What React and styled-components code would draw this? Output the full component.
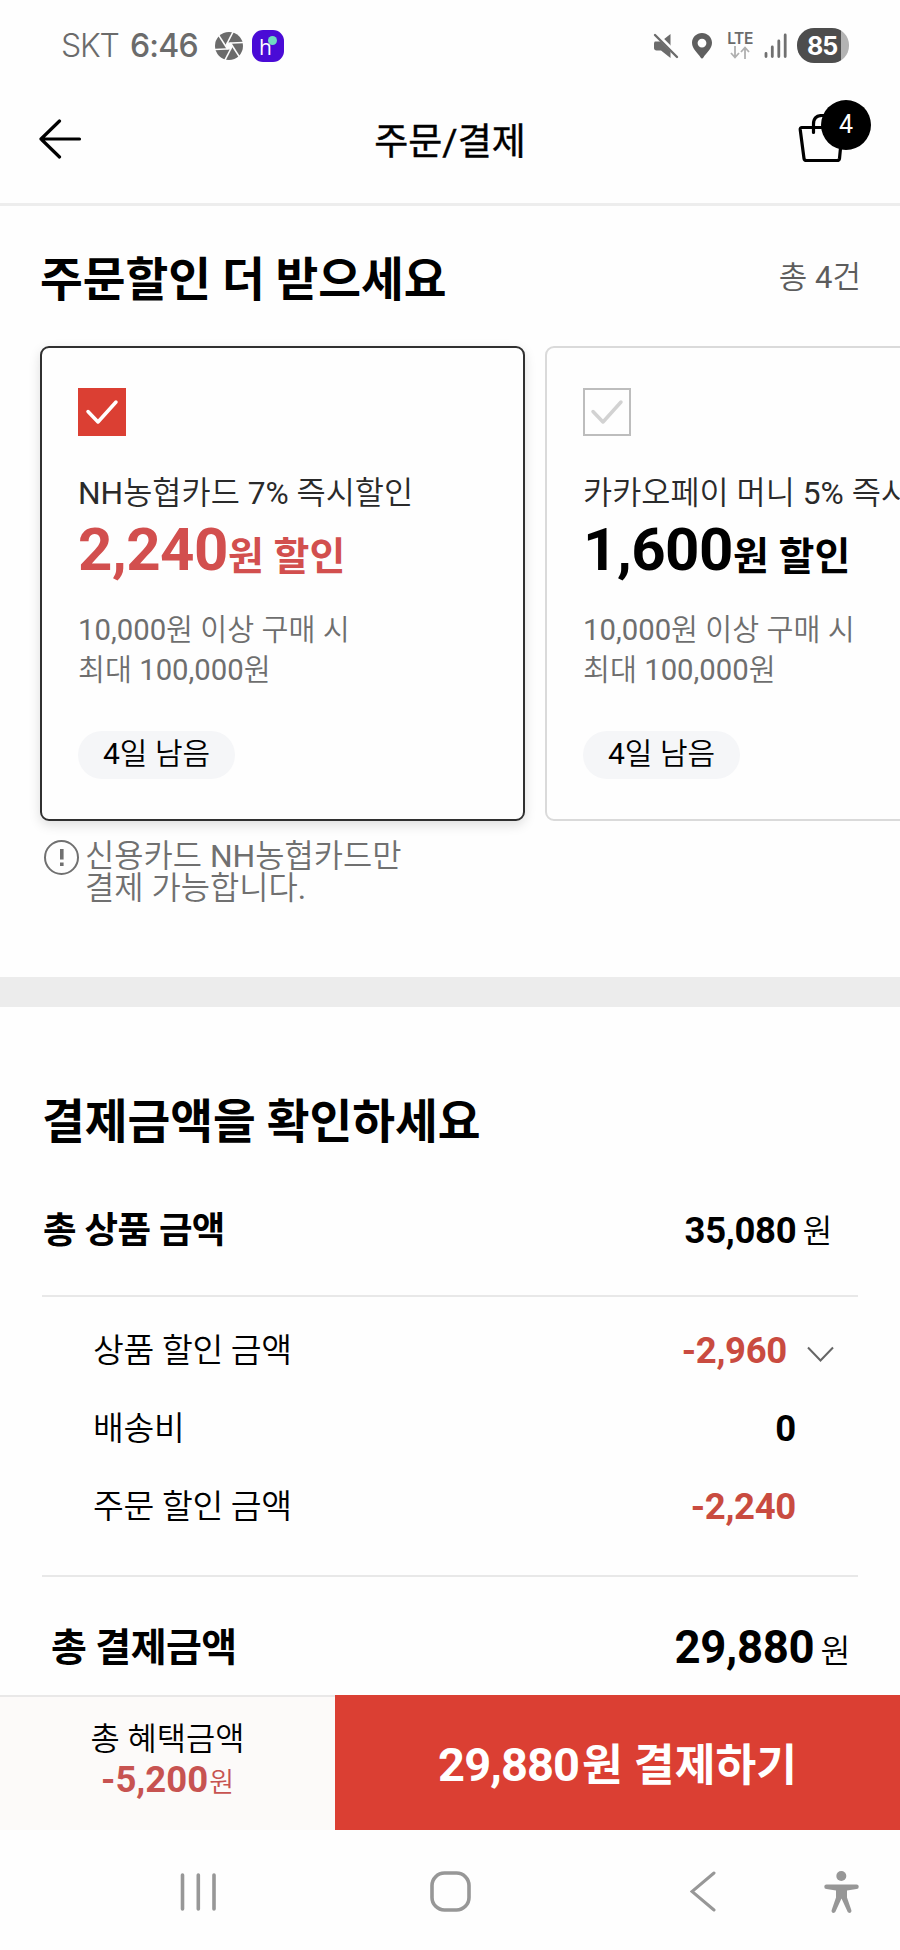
import React from 'react';
import styled, { createGlobalStyle } from 'styled-components'

const GlobalStyle = createGlobalStyle`
    :root{
        --primary: #db3f33;
        --ko: "Noto Sans CJK KR", sans-serif;
        --mix: Roboto, "Noto Sans CJK KR", sans-serif;
        --thin: Roboto, "Noto Sans CJK KR DemiLight", "Noto Sans CJK KR", sans-serif;
        --nav: #979797;
    }
    *{
        box-sizing: border-box;
    }
    body{
        margin: 0;
        background: #fefefe;
        color: #000;
        font-family: var(--mix);
        -webkit-font-smoothing: antialiased;
    }
    h1, h2, p{
        margin: 0;
    }
    svg{
        display: block;
        flex-shrink: 0;
    }
`

const Page = styled.div`
    width: 900px;
    height: 1950px;
    display: flex;
    flex-direction: column;
    overflow: hidden;
    white-space: nowrap;
`

const StatusBar = styled.div`
    height: 92px;
    padding: 0 51px 0 61px;
    display: flex;
    justify-content: space-between;
    align-items: center;
    color: #6b6b6b;
`

const StatusGroup = styled.div`
    display: flex;
    align-items: center;
`

const Carrier = styled.span`
    width: 69px;
    font: 300 32px/40px Inter, sans-serif;
    letter-spacing: -1.2px;
`

const Clock = styled.span`
    width: 85px;
    font: 500 32px/40px Inter, sans-serif;
    letter-spacing: -.8px;
`

const AppBadge = styled.span`
    position: relative;
    width: 32px;
    height: 32px;
    margin-left: 9px;
    border-radius: 11px;
    background: #4a0bd6;
    color: #fff;
    font: 500 21px/35px "Open Sans", sans-serif;
    padding-left: 7px;
    &::after{
        content: '';
        position: absolute;
        top: 6px;
        left: 16px;
        width: 9px;
        height: 9px;
        border-radius: 50%;
        background: #6fdcc0;
    }
`

const LocationPin = styled.svg`
    margin-left: 13px;
`

const Network = styled.div`
    width: 28px;
    margin: 0 10px 0 14px;
    display: flex;
    flex-direction: column;
    align-items: center;
    font: 600 15.5px/14px Inter, sans-serif;
    letter-spacing: -.4px;
`

const Battery = styled.span`
    width: 52px;
    height: 35px;
    margin-left: 10px;
    border-radius: 17px;
    background: linear-gradient(to right, #4d4d4d 44px, #b3b3b3 44px);
    color: #fff;
    font: 700 25px/36px Inter, sans-serif;
    letter-spacing: -1px;
    padding-left: 10px;
`

const Header = styled.header`
    height: 114px;
    padding: 0 29px 0 38px;
    border-bottom: 3px solid #ededed;
    display: grid;
    grid-template-columns: 1fr auto 1fr;
    align-items: center;
`

const HeaderTitle = styled.h1`
    padding: 0 9px 9px 0;
    font: 400 37px/50px var(--mix);
    -webkit-text-stroke: .4px #000;
`

const BackLink = styled.div`
    padding-bottom: 16px;
`

const Bag = styled.div`
    position: relative;
    justify-self: end;
    width: 73px;
    height: 64px;
    margin-bottom: 31px;
    svg{
        margin-top: 14px;
    }
`

const Count = styled.span`
    position: absolute;
    top: 0;
    right: 0;
    width: 50px;
    height: 50px;
    border-radius: 50%;
    background: #000;
    color: #fff;
    font: 400 25px/50px Roboto, sans-serif;
    text-align: center;
`

const DiscountSection = styled.section`
    height: 772px;
    padding: 47px 0 0 40px;
    overflow: hidden;
`

const SectionHead = styled.div`
    display: flex;
    justify-content: space-between;
    align-items: center;
    height: 54px;
    padding-right: 39px;
`

const SectionTitle = styled.h2`
    font: 700 46.5px/54px var(--mix);
    word-spacing: -.8px;
`

const Total = styled.span`
    padding-bottom: 4px;
    font: 400 31px/40px var(--thin);
    color: #5c5c5c;
`

const CardList = styled.div`
    display: flex;
    gap: 20px;
    margin-top: 39px;
`

const Card = styled.article`
    flex: 0 0 485px;
    height: 475px;
    padding: 40px 36px;
    border: 2px solid ${props => props.$selected ? '#303030' : '#dadada'};
    border-radius: 9px;
    box-shadow: ${props => props.$selected ? '0 4px 12px rgba(0,0,0,.13)' : 'none'};
    display: flex;
    flex-direction: column;
    align-items: flex-start;
`

const CheckBox = styled.span`
    width: 48px;
    height: 48px;
    border: 2px solid ${props => props.$checked ? 'var(--primary)' : '#bdbdbd'};
    background: ${props => props.$checked ? 'var(--primary)' : 'transparent'};
    color: ${props => props.$checked ? '#fff' : '#d2d2d2'};
    display: grid;
    place-items: center;
`

const CardName = styled.p`
    margin-top: 38px;
    font: 400 31.7px/40px var(--thin);
    color: #2a2a2a;
`

const CardPrice = styled.p`
    margin-top: 6px;
    font-size: 60px;
    font-weight: 700;
    line-height: 60px;
    letter-spacing: -.5px;
    color: ${props => props.$selected ? '#d24f4e' : '#000'};
    span{
        font: 700 39px/1 var(--mix);
        letter-spacing: 0;
    }
`

const CardTerms = styled.p`
    margin-top: 30px;
    font: 400 29.3px/40px var(--thin);
    color: #6e6e6e;
`

const DaysLeft = styled.span`
    height: 48px;
    margin-top: 41px;
    padding: 0 25px;
    border-radius: 24px;
    background: #f5f6f8;
    font: 400 30px/46px var(--thin);
`

const Notice = styled.div`
    display: flex;
    gap: 5px;
    margin-top: 18px;
    padding-left: 3px;
    color: #707070;
    p{
        margin-top: 1px;
        font: 400 31.8px/32.5px var(--thin);
    }
`

const Divider = styled.div`
    height: 30px;
    background: #ececec;
`

const AmountSection = styled.section`
    flex: 1;
    padding: 88px 42px 0;
`

const TotalRow = styled.div`
    display: flex;
    justify-content: space-between;
    align-items: center;
    height: ${props => props.$height};
    padding: ${props => props.$padding};
    font: 700 ${props => props.$size}/50px var(--mix);
    letter-spacing: -.6px;
`

const Amount = styled.span`
    display: flex;
    align-items: baseline;
    font: 700 ${props => props.$size || '36.5px'}/50px Roboto, sans-serif;
    letter-spacing: -.3px;
    color: ${props => props.$minus ? '#c94b40' : '#000'};
    i{
        margin-left: 6px;
        font: 350 32.5px/1 var(--ko);
    }
`

const Breakdown = styled.div`
    height: 282px;
    padding: 15px 0 0 51px;
    border-top: 2px solid #e8e8e8;
    border-bottom: 2px solid #e8e8e8;
`

const BreakdownRow = styled.div`
    display: flex;
    align-items: center;
    height: 78px;
    padding-right: ${props => props.$expandable ? '24px' : '62px'};
    > span:first-child{
        flex: 1;
        font: 350 33.5px/50px var(--mix);
        letter-spacing: -.3px;
    }
    svg{
        margin: 6px 0 0 20px;
    }
`

const PayBar = styled.div`
    height: 135px;
    display: flex;
`

const Benefit = styled.div`
    width: 335px;
    border-top: 2px solid #e9e8e8;
    background: #fcfaf9;
    display: flex;
    flex-direction: column;
    align-items: center;
    padding-top: 21px;
    font-size: 31.8px;
    line-height: 43px;
    font-weight: 350;
    strong{
        font-size: 36.5px;
        font-weight: 700;
        line-height: 38px;
        color: #c75351;
    }
    i{
        font: 350 27px/1 var(--ko);
        margin-left: 1px;
    }
`

const PayButton = styled.div`
    flex: 1;
    background: var(--primary);
    color: #fff;
    font: 700 44.3px/142px var(--mix);
    text-align: center;
    span{
        font: 700 47px/1 Roboto, sans-serif;
        letter-spacing: -.9px;
        margin-right: 3px;
    }
`

const NavBar = styled.nav`
    height: 120px;
    padding: 3px 41px 0 180px;
    display: grid;
    grid-template-columns: 250px 260px 134px 36px;
    align-items: center;
    color: var(--nav);
`

const discounts = [
    { name: 'NH농협카드 7% 즉시할인', price: '2,240', selected: true },
    { name: '카카오페이 머니 5% 즉시할인', price: '1,600', selected: false },
]

const breakdown = [
    { label: '상품 할인 금액', value: '-2,960', minus: true, expandable: true },
    { label: '배송비', value: '0' },
    { label: '주문 할인 금액', value: '-2,240', minus: true },
]

function Aperture() {
    return (
        <svg width="28" height="28" viewBox="0 0 28 28">
            <circle cx="14" cy="14" r="14" fill="#6b6b6b"/>
            {
                [0, 60, 120, 180, 240, 300].map(angle => (
                    <path
                        key={angle}
                        d="M10.500 14.500L18.500 -1"
                        stroke="#fefefe"
                        strokeWidth="1.600"
                        transform={`rotate(${angle} 14 14)`}
                    />
                ))
            }
            <circle cx="14" cy="14" r="2.800" fill="#fefefe"/>
        </svg>
    )
}

function StatusIcons() {
    return (
        <>
            <svg width="26" height="28" viewBox="0 0 26 28" fill="currentColor">
                <path d="M2 9.500h6l9.500-7.500v24L8 18.500H3.500C2 18.500 1 17.500 1 16v-4c0-1 .4-2.500 1-2.500z"/>
                <path d="M1.500 .5L25 24" stroke="#fefefe" strokeWidth="4.500"/>
                <path d="M2 3L24 25" stroke="currentColor" strokeWidth="2.400" strokeLinecap="round"/>
            </svg>
            <LocationPin width="20" height="26" viewBox="0 0 20 26">
                <path
                    d="M10 0C4.500 0 0 4.300 0 9.800 0 16 6 20 8.600 24.500c.7 1.200 2.100 1.200 2.800 0C14 20 20 16 20 9.800 20 4.300 15.500 0 10 0zM10 5.700a4.400 4.400 0 1 1 0 8.800 4.400 4.400 0 0 1 0-8.800z"
                    fill="#5f5f5f"
                    fillRule="evenodd"
                />
            </LocationPin>
        </>
    )
}

function CheckMark() {
    return (
        <svg width="34" height="28" viewBox="0 0 34 28" fill="none">
            <path d="M3 13.500L13 24L31 4" stroke="currentColor" strokeWidth="3.500" strokeLinecap="round" strokeLinejoin="round"/>
        </svg>
    )
}

function DiscountCard({ name, price, selected }) {
    return (
        <Card $selected={selected}>
            <CheckBox $checked={selected}>
                <CheckMark/>
            </CheckBox>
            <CardName>{name}</CardName>
            <CardPrice $selected={selected}>{price}<span>원 할인</span></CardPrice>
            <CardTerms>
                10,000원 이상 구매 시<br/>
                최대 100,000원
            </CardTerms>
            <DaysLeft>4일 남음</DaysLeft>
        </Card>
    )
}

function App() {
    return (
        <Page>
            <GlobalStyle/>
            <StatusBar>
                <StatusGroup>
                    <Carrier>SKT</Carrier>
                    <Clock>6:46</Clock>
                    <Aperture/>
                    <AppBadge>h</AppBadge>
                </StatusGroup>
                <StatusGroup>
                    <StatusIcons/>
                    <Network>
                        LTE
                        <svg width="20" height="13" viewBox="0 0 20 13" fill="none" stroke="#b0b0b0" strokeWidth="1.800">
                            <path d="M5 0v11M1 7l4 4.500L9 7M15 13V2M11 6l4-4.500L19 6"/>
                        </svg>
                    </Network>
                    <svg width="23" height="26" viewBox="0 0 23 26" stroke="#707070" strokeWidth="2.800" strokeLinecap="round">
                        <path d="M2 20.500v3M8.300 14v9.500M14.800 8v15.500M21.200 2v21.500"/>
                    </svg>
                    <Battery>85</Battery>
                </StatusGroup>
            </StatusBar>

            <Header>
                <BackLink>
                    <svg width="44" height="40" viewBox="0 0 44 40" fill="none" stroke="#000" strokeWidth="3.200" strokeLinecap="round" strokeLinejoin="round">
                        <path d="M41.500 20H3M21.500 2L3 20L21.500 38"/>
                    </svg>
                </BackLink>
                <HeaderTitle>주문/결제</HeaderTitle>
                <Bag>
                    <svg width="48" height="50" viewBox="0 0 48 50" fill="none" stroke="#000" strokeWidth="3.200" strokeLinejoin="round" strokeLinecap="round">
                        <path d="M3.500 13.500H44.500L41.500 44.500Q41.200 46.500 39 46.500H8.500Q6.300 46.500 6 44.500L2.200 15.500Q2 13.500 4 13.500Z"/>
                        <path d="M15.500 18.500V10Q15.500 1.500 24 1.500T32.500 10V18.500"/>
                    </svg>
                    <Count>4</Count>
                </Bag>
            </Header>

            <DiscountSection>
                <SectionHead>
                    <SectionTitle>주문할인 더 받으세요</SectionTitle>
                    <Total>총 4건</Total>
                </SectionHead>
                <CardList>
                    {
                        discounts.map(item => <DiscountCard key={item.name} {...item}/>)
                    }
                </CardList>
                <Notice>
                    <svg width="37" height="37" viewBox="0 0 37 37" fill="none" stroke="currentColor">
                        <circle cx="18.500" cy="18.500" r="16.500" strokeWidth="2"/>
                        <path d="M18.800 10v10.500M18.800 23.500v3.500" strokeWidth="3.600"/>
                    </svg>
                    <p>
                        신용카드 NH농협카드만<br/>
                        결제 가능합니다.
                    </p>
                </Notice>
            </DiscountSection>

            <Divider/>

            <AmountSection>
                <SectionTitle>결제금액을 확인하세요</SectionTitle>
                <TotalRow $size="36.5px" $height="146px" $padding="17px 26px 0 1px">
                    총 상품 금액
                    <Amount>35,080<i>원</i></Amount>
                </TotalRow>
                <Breakdown>
                    {
                        breakdown.map(row => (
                            <BreakdownRow key={row.label} $expandable={row.expandable}>
                                <span>{row.label}</span>
                                <Amount $minus={row.minus}>{row.value}</Amount>
                                {
                                    row.expandable ? (
                                        <svg width="27" height="17" viewBox="0 0 27 17" fill="none" stroke="#666" strokeWidth="2">
                                            <path d="M1 1.500L13.500 14.500L26 1.500"/>
                                        </svg>
                                    ) : null
                                }
                            </BreakdownRow>
                        ))
                    }
                </Breakdown>
                <TotalRow $size="39px" $height="118px" $padding="24px 8px 0 9px">
                    총 결제금액
                    <Amount $size="45.5px">29,880<i>원</i></Amount>
                </TotalRow>
            </AmountSection>

            <PayBar>
                <Benefit>
                    <span>총 혜택금액</span>
                    <strong>-5,200<i>원</i></strong>
                </Benefit>
                <PayButton><span>29,880</span>원 결제하기</PayButton>
            </PayBar>

            <NavBar>
                <svg width="37" height="40" viewBox="0 0 37 40" stroke="currentColor" strokeWidth="3.600" strokeLinecap="round">
                    <path d="M2.500 3v34M18.300 3v34M34 3v34"/>
                </svg>
                <svg width="41" height="41" viewBox="0 0 41 41" fill="none" stroke="currentColor" strokeWidth="3.600">
                    <rect x="2" y="2" width="37" height="37" rx="12.500"/>
                </svg>
                <svg width="26" height="41" viewBox="0 0 26 41" fill="none" stroke="currentColor" strokeWidth="3" strokeLinecap="round">
                    <path d="M24 2L2 20.500L24 39"/>
                </svg>
                <svg width="35" height="42" viewBox="0 0 35 42" fill="currentColor">
                    <circle cx="17.300" cy="5" r="5"/>
                    <path d="M2.500 13.500h30a2.200 2.200 0 0 1 0 4.500L23 19.500v7l4.300 12.500c.9 3-2.700 4-3.800 1.500L17.500 27.500 11.500 40.500c-1.100 2.500-4.700 1.500-3.800-1.500L12 26.500v-7L2.500 18a2.200 2.200 0 0 1 0-4.500z"/>
                </svg>
            </NavBar>
        </Page>
    )
}

export default App
